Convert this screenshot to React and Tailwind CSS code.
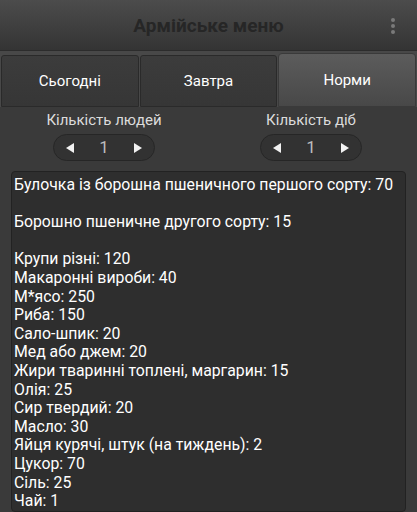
import React from "react";

const lines = [
  "Булочка із борошна пшеничного першого сорту: 70",
  "",
  "Борошно пшеничне другого сорту: 15",
  "",
  "Крупи різні: 120",
  "Макаронні вироби: 40",
  "М*ясо: 250",
  "Риба: 150",
  "Сало-шпик: 20",
  "Мед або джем: 20",
  "Жири тваринні топлені, маргарин: 15",
  "Олія: 25",
  "Сир твердий: 20",
  "Масло: 30",
  "Яйця курячі, штук (на тиждень): 2",
  "Цукор: 70",
  "Сіль: 25",
  "Чай: 1",
];

function Stepper() {
  return (
    <div className="flex items-center justify-between w-[102px] h-[27px] rounded-full border border-[#262626] bg-[#323232] px-[10px]">
      <svg width="12" height="12" viewBox="0 0 12 12"><path d="M10 1 L2 6 L10 11 Z" fill="#f2f2f2" /></svg>
      <span className="text-[17px] text-[#bdbdbd]">1</span>
      <svg width="12" height="12" viewBox="0 0 12 12"><path d="M2 1 L10 6 L2 11 Z" fill="#f2f2f2" /></svg>
    </div>
  );
}

export default function App() {
  return (
    <div className="w-[417px] h-[512px] overflow-hidden bg-[#3a3a3a] flex flex-col" style={{ fontFamily: "Roboto, 'Noto Sans', sans-serif" }}>
      <div className="relative h-[51px] shrink-0 bg-gradient-to-b from-[#4c4c4c] to-[#343434] flex items-center justify-center border-b border-[#2c2c2c] pt-[3px]">
        <span className="text-[19px] font-bold text-[#262626]">Армійське меню</span>
        <div className="absolute right-[22px] top-[18px] flex flex-col gap-[2px]">
          <div className="w-[4px] h-[4px] rounded-full bg-[#7a7a7a]" />
          <div className="w-[4px] h-[4px] rounded-full bg-[#7a7a7a]" />
          <div className="w-[4px] h-[4px] rounded-full bg-[#7a7a7a]" />
        </div>
      </div>
      <div className="h-[56px] shrink-0 bg-[#484848] flex items-end px-[1px] gap-[1px]">
        <div className="flex-1 h-[52px] rounded-t-[3px] border border-[#2a2a2a] bg-gradient-to-b from-[#3c3c3c] to-[#363636] flex items-center justify-center text-[15px] text-white">Сьогодні</div>
        <div className="flex-1 h-[52px] rounded-t-[3px] border border-[#2a2a2a] bg-gradient-to-b from-[#3c3c3c] to-[#363636] flex items-center justify-center text-[15px] text-white">Завтра</div>
        <div className="flex-1 h-[54px] rounded-t-[4px] border border-[#3a3a3a] bg-gradient-to-b from-[#5c5c5c] to-[#484848] flex items-center justify-center text-[15px] text-white">Норми</div>
      </div>
      <div className="flex pl-[46px] gap-[91px] pt-[3px]">
        <div className="w-[116px] flex flex-col items-center gap-[4px]">
          <span className="text-[15px] text-[#dcdcdc] leading-[20px] whitespace-nowrap">Кількість людей</span>
          <Stepper />
        </div>
        <div className="w-[116px] flex flex-col items-center gap-[4px]">
          <span className="text-[15px] text-[#dcdcdc] leading-[20px] whitespace-nowrap">Кількість діб</span>
          <Stepper />
        </div>
      </div>
      <div className="mx-[11px] mt-[10px] flex-1 rounded-[4px] border border-[#222] bg-[#2e2e2e] px-[2px] pt-[4px]">
        {lines.map((l, i) => (
          <div key={i} className="text-[15.8px] leading-[18.6px] text-white h-[18.6px] whitespace-nowrap">{l}</div>
        ))}
      </div>
    </div>
  );
}
